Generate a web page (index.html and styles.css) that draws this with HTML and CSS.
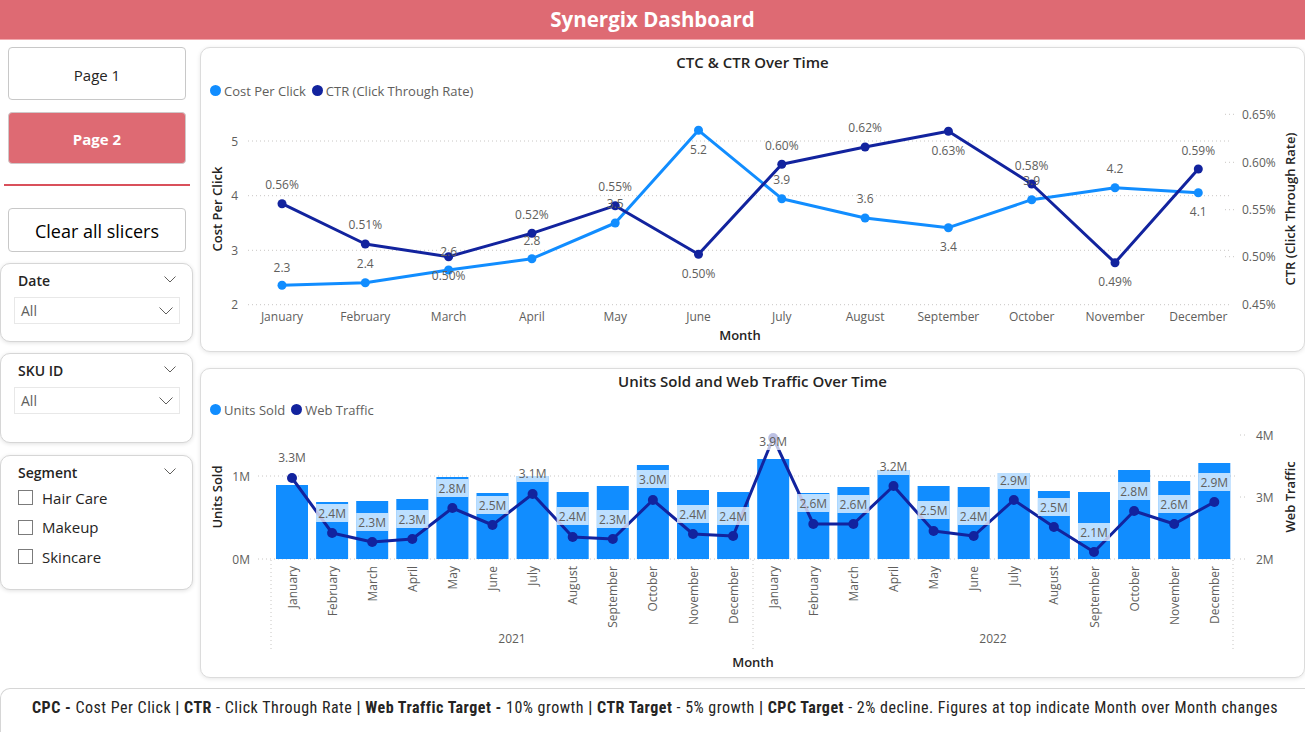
FILE: index.html
```html
<!DOCTYPE html>
<html lang="en">
<head>
<meta charset="utf-8">
<title>Synergix Dashboard</title>
<link rel="stylesheet" href="styles.css">
</head>
<body>
<header class="topbar">Synergix Dashboard</header>
<div class="layout">
  <aside class="sidebar">
    <div class="nav-btn">Page 1</div>
    <div class="nav-btn nav-active">Page 2</div>
    <div class="divider"></div>
    <div class="clear-btn">Clear all slicers</div>

    <div class="slicer slicer-date">
      <div class="slicer-head"><span>Date</span><svg class="chev" width="12" height="7" viewBox="0 0 12 7"><path d="M0.5 0.5 L6 6 L11.5 0.5" fill="none" stroke="#605E5C" stroke-width="1"/></svg></div>
      <div class="dropdown"><span>All</span><svg class="chev" width="14" height="8" viewBox="0 0 14 8"><path d="M0.5 0.5 L7 7 L13.5 0.5" fill="none" stroke="#605E5C" stroke-width="1"/></svg></div>
    </div>

    <div class="slicer slicer-sku">
      <div class="slicer-head"><span>SKU ID</span><svg class="chev" width="12" height="7" viewBox="0 0 12 7"><path d="M0.5 0.5 L6 6 L11.5 0.5" fill="none" stroke="#605E5C" stroke-width="1"/></svg></div>
      <div class="dropdown"><span>All</span><svg class="chev" width="14" height="8" viewBox="0 0 14 8"><path d="M0.5 0.5 L7 7 L13.5 0.5" fill="none" stroke="#605E5C" stroke-width="1"/></svg></div>
    </div>

    <div class="slicer slicer-seg">
      <div class="slicer-head"><span>Segment</span><svg class="chev" width="12" height="7" viewBox="0 0 12 7"><path d="M0.5 0.5 L6 6 L11.5 0.5" fill="none" stroke="#605E5C" stroke-width="1"/></svg></div>
      <div class="check-list">
        <label class="check"><span class="box"></span>Hair Care</label>
        <label class="check"><span class="box"></span>Makeup</label>
        <label class="check"><span class="box"></span>Skincare</label>
      </div>
    </div>
  </aside>

  <main class="charts">
    <section class="card card-top">
      <div class="card-title">CTC &amp; CTR Over Time</div>
      <div class="legend">
        <span class="lg"><i class="dot dot-light"></i>Cost Per Click</span>
        <span class="lg"><i class="dot dot-dark"></i>CTR (Click Through Rate)</span>
      </div>
      <svg class="plot" width="1103" height="245" viewBox="0 0 1103 245">
        <g class="grid">
          <line x1="47" y1="35" x2="1029" y2="35"/>
          <line x1="47" y1="89.7" x2="1029" y2="89.7"/>
          <line x1="47" y1="144.3" x2="1029" y2="144.3"/>
          <line x1="47" y1="198.7" x2="1029" y2="198.7"/>
          <line x1="1024" y1="8.3" x2="1036" y2="8.3"/>
          <line x1="1024" y1="56.3" x2="1036" y2="56.3"/>
          <line x1="1024" y1="103.7" x2="1036" y2="103.7"/>
          <line x1="1024" y1="150.7" x2="1036" y2="150.7"/>
        </g>
        <g class="tick" text-anchor="end">
          <text x="37" y="35">5</text>
          <text x="37" y="89.7">4</text>
          <text x="37" y="144.3">3</text>
          <text x="37" y="198.7">2</text>
        </g>
        <g class="tick" text-anchor="start">
          <text x="1041" y="8.3">0.65%</text>
          <text x="1041" y="56.3">0.60%</text>
          <text x="1041" y="103.7">0.55%</text>
          <text x="1041" y="150.7">0.50%</text>
          <text x="1041" y="198">0.45%</text>
        </g>
        <g class="tick" text-anchor="middle">
          <text x="81" y="210">January</text>
          <text x="164.3" y="210">February</text>
          <text x="247.6" y="210">March</text>
          <text x="330.9" y="210">April</text>
          <text x="414.2" y="210">May</text>
          <text x="497.5" y="210">June</text>
          <text x="580.8" y="210">July</text>
          <text x="664.1" y="210">August</text>
          <text x="747.4" y="210">September</text>
          <text x="830.7" y="210">October</text>
          <text x="914" y="210">November</text>
          <text x="997.3" y="210">December</text>
        </g>
        <text class="axis-title" x="539" y="229" text-anchor="middle">Month</text>
        <text class="axis-title" transform="translate(16,103) rotate(-90)" text-anchor="middle">Cost Per Click</text>
        <text class="axis-title" transform="translate(1089,103) rotate(-90)" text-anchor="middle">CTR (Click Through Rate)</text>

        <polyline class="ln ln-light" points="81,179.3 164.3,176.7 247.6,164 330.9,152.7 414.2,117 497.5,24.3 580.8,92.7 664.1,112 747.4,121.7 830.7,93.7 914,81.7 997.3,86.7"/>
        <g class="mk-light">
          <circle cx="81" cy="179.3" r="4.5"/><circle cx="164.3" cy="176.7" r="4.5"/><circle cx="247.6" cy="164" r="4.5"/><circle cx="330.9" cy="152.7" r="4.5"/><circle cx="414.2" cy="117" r="4.5"/><circle cx="497.5" cy="24.3" r="4.5"/><circle cx="580.8" cy="92.7" r="4.5"/><circle cx="664.1" cy="112" r="4.5"/><circle cx="747.4" cy="121.7" r="4.5"/><circle cx="830.7" cy="93.7" r="4.5"/><circle cx="914" cy="81.7" r="4.5"/><circle cx="997.3" cy="86.7" r="4.5"/>
        </g>
        <polyline class="ln ln-dark" points="81,97.7 164.3,138 247.6,150.7 330.9,127.3 414.2,99.7 497.5,148.3 580.8,58.3 664.1,41 747.4,25.3 830.7,78 914,156.7 997.3,63"/>
        <g class="mk-dark">
          <circle cx="81" cy="97.7" r="4.5"/><circle cx="164.3" cy="138" r="4.5"/><circle cx="247.6" cy="150.7" r="4.5"/><circle cx="330.9" cy="127.3" r="4.5"/><circle cx="414.2" cy="99.7" r="4.5"/><circle cx="497.5" cy="148.3" r="4.5"/><circle cx="580.8" cy="58.3" r="4.5"/><circle cx="664.1" cy="41" r="4.5"/><circle cx="747.4" cy="25.3" r="4.5"/><circle cx="830.7" cy="78" r="4.5"/><circle cx="914" cy="156.7" r="4.5"/><circle cx="997.3" cy="63" r="4.5"/>
        </g>
        <g class="dl" text-anchor="middle">
          <text x="81" y="161">2.3</text>
          <text x="164.3" y="157.7">2.4</text>
          <text x="247.6" y="145">2.6</text>
          <text x="330.9" y="134">2.8</text>
          <text x="414.2" y="97.3">3.5</text>
          <text x="497.5" y="43.3">5.2</text>
          <text x="580.8" y="73.3">3.9</text>
          <text x="664.1" y="92.7">3.6</text>
          <text x="747.4" y="140.7">3.4</text>
          <text x="830.7" y="74">3.9</text>
          <text x="914" y="62.7">4.2</text>
          <text x="997.3" y="105.7">4.1</text>
          <text x="81" y="78.7">0.56%</text>
          <text x="164.3" y="118.3">0.51%</text>
          <text x="247.6" y="169.3">0.50%</text>
          <text x="330.9" y="108.3">0.52%</text>
          <text x="414.2" y="80">0.55%</text>
          <text x="497.5" y="167.3">0.50%</text>
          <text x="580.8" y="39.7">0.60%</text>
          <text x="664.1" y="21.7">0.62%</text>
          <text x="747.4" y="44.3">0.63%</text>
          <text x="830.7" y="59.3">0.58%</text>
          <text x="914" y="175">0.49%</text>
          <text x="997.3" y="44.3">0.59%</text>
        </g>
      </svg>
    </section>

    <section class="card card-bottom">
      <div class="card-title">Units Sold and Web Traffic Over Time</div>
      <div class="legend">
        <span class="lg"><i class="dot dot-light"></i>Units Sold</span>
        <span class="lg"><i class="dot dot-dark"></i>Web Traffic</span>
      </div>
      <svg class="plot" width="1103" height="250" viewBox="0 0 1103 250">
        <g class="grid">
          <line x1="57" y1="49" x2="1034" y2="49"/>
          <line x1="57" y1="132" x2="1034" y2="132"/>
          <line x1="1039" y1="8" x2="1047" y2="8"/>
          <line x1="1039" y1="70" x2="1047" y2="70"/>
          <line x1="1039" y1="132" x2="1047" y2="132"/>
          <line x1="70" y1="133" x2="70" y2="223"/>
          <line x1="552" y1="133" x2="552" y2="223"/>
          <line x1="1032" y1="133" x2="1032" y2="223"/>
        </g>
        <g class="tick" text-anchor="end">
          <text x="49" y="49">1M</text>
          <text x="49" y="132">0M</text>
        </g>
        <g class="tick" text-anchor="start">
          <text x="1055" y="8">4M</text>
          <text x="1055" y="70">3M</text>
          <text x="1055" y="132">2M</text>
        </g>
        <g class="bars">
          <rect x="75" y="58" width="32" height="74"/>
          <rect x="115.1" y="75" width="32" height="57"/>
          <rect x="155.2" y="74" width="32" height="58"/>
          <rect x="195.3" y="72" width="32" height="60"/>
          <rect x="235.4" y="50" width="32" height="82"/>
          <rect x="275.5" y="66" width="32" height="66"/>
          <rect x="315.6" y="49" width="32" height="83"/>
          <rect x="355.7" y="65" width="32" height="67"/>
          <rect x="395.8" y="59" width="32" height="73"/>
          <rect x="435.9" y="38" width="32" height="94"/>
          <rect x="476" y="63" width="32" height="69"/>
          <rect x="516.1" y="65" width="32" height="67"/>
          <rect x="556.2" y="32" width="32" height="100"/>
          <rect x="596.3" y="66" width="32" height="66"/>
          <rect x="636.4" y="60" width="32" height="72"/>
          <rect x="676.5" y="43" width="32" height="89"/>
          <rect x="716.6" y="59" width="32" height="73"/>
          <rect x="756.7" y="60" width="32" height="72"/>
          <rect x="796.8" y="46" width="32" height="86"/>
          <rect x="836.9" y="64" width="32" height="68"/>
          <rect x="877" y="65" width="32" height="67"/>
          <rect x="917.1" y="43" width="32" height="89"/>
          <rect x="957.2" y="54" width="32" height="78"/>
          <rect x="997.3" y="36" width="32" height="96"/>
        </g>
        <polyline class="ln ln-dark" points="91,51 131.1,106 171.2,115 211.3,112 251.4,81 291.5,98 331.6,67 371.7,110 411.8,112 451.9,73 492,107 532.1,109 572.2,11 612.3,97 652.4,97 692.5,59 732.6,104 772.7,109 812.8,73 852.9,100 893,125 933.1,84 973.2,97 1013.3,75"/>
        <g class="mk-dark">
          <circle cx="91" cy="51" r="5"/><circle cx="131.1" cy="106" r="5"/><circle cx="171.2" cy="115" r="5"/><circle cx="211.3" cy="112" r="5"/><circle cx="251.4" cy="81" r="5"/><circle cx="291.5" cy="98" r="5"/><circle cx="331.6" cy="67" r="5"/><circle cx="371.7" cy="110" r="5"/><circle cx="411.8" cy="112" r="5"/><circle cx="451.9" cy="73" r="5"/><circle cx="492" cy="107" r="5"/><circle cx="532.1" cy="109" r="5"/><circle cx="572.2" cy="11" r="5"/><circle cx="612.3" cy="97" r="5"/><circle cx="652.4" cy="97" r="5"/><circle cx="692.5" cy="59" r="5"/><circle cx="732.6" cy="104" r="5"/><circle cx="772.7" cy="109" r="5"/><circle cx="812.8" cy="73" r="5"/><circle cx="852.9" cy="100" r="5"/><circle cx="893" cy="125" r="5"/><circle cx="933.1" cy="84" r="5"/><circle cx="973.2" cy="97" r="5"/><circle cx="1013.3" cy="75" r="5"/>
        </g>
        <g class="lbl-box">
          <rect x="75" y="21" width="32" height="18"/>
          <rect x="115.1" y="77" width="32" height="18"/>
          <rect x="155.2" y="86" width="32" height="18"/>
          <rect x="195.3" y="83" width="32" height="18"/>
          <rect x="235.4" y="52" width="32" height="18"/>
          <rect x="275.5" y="69" width="32" height="18"/>
          <rect x="315.6" y="37" width="32" height="18"/>
          <rect x="355.7" y="80" width="32" height="18"/>
          <rect x="395.8" y="83" width="32" height="18"/>
          <rect x="435.9" y="43" width="32" height="18"/>
          <rect x="476" y="78" width="32" height="18"/>
          <rect x="516.1" y="80" width="32" height="18"/>
          <rect x="556.2" y="5" width="32" height="18"/>
          <rect x="596.3" y="67" width="32" height="18"/>
          <rect x="636.4" y="68" width="32" height="18"/>
          <rect x="676.5" y="30" width="32" height="18"/>
          <rect x="716.6" y="74" width="32" height="18"/>
          <rect x="756.7" y="80" width="32" height="18"/>
          <rect x="796.8" y="44" width="32" height="18"/>
          <rect x="836.9" y="71" width="32" height="18"/>
          <rect x="877" y="96" width="32" height="18"/>
          <rect x="917.1" y="55" width="32" height="18"/>
          <rect x="957.2" y="68" width="32" height="18"/>
          <rect x="997.3" y="46" width="32" height="18"/>
        </g>
        <g class="dl" text-anchor="middle">
          <text x="91" y="30">3.3M</text>
          <text x="131.1" y="86">2.4M</text>
          <text x="171.2" y="95">2.3M</text>
          <text x="211.3" y="92">2.3M</text>
          <text x="251.4" y="61">2.8M</text>
          <text x="291.5" y="78">2.5M</text>
          <text x="331.6" y="46">3.1M</text>
          <text x="371.7" y="89">2.4M</text>
          <text x="411.8" y="92">2.3M</text>
          <text x="451.9" y="52">3.0M</text>
          <text x="492" y="87">2.4M</text>
          <text x="532.1" y="89">2.4M</text>
          <text x="572.2" y="14">3.9M</text>
          <text x="612.3" y="76">2.6M</text>
          <text x="652.4" y="77">2.6M</text>
          <text x="692.5" y="39">3.2M</text>
          <text x="732.6" y="83">2.5M</text>
          <text x="772.7" y="89">2.4M</text>
          <text x="812.8" y="53">2.9M</text>
          <text x="852.9" y="80">2.5M</text>
          <text x="893" y="105">2.1M</text>
          <text x="933.1" y="64">2.8M</text>
          <text x="973.2" y="77">2.6M</text>
          <text x="1013.3" y="55">2.9M</text>
        </g>
        <g class="tick" text-anchor="end">
          <text transform="translate(91,139) rotate(-90)">January</text>
          <text transform="translate(131.1,139) rotate(-90)">February</text>
          <text transform="translate(171.2,139) rotate(-90)">March</text>
          <text transform="translate(211.3,139) rotate(-90)">April</text>
          <text transform="translate(251.4,139) rotate(-90)">May</text>
          <text transform="translate(291.5,139) rotate(-90)">June</text>
          <text transform="translate(331.6,139) rotate(-90)">July</text>
          <text transform="translate(371.7,139) rotate(-90)">August</text>
          <text transform="translate(411.8,139) rotate(-90)">September</text>
          <text transform="translate(451.9,139) rotate(-90)">October</text>
          <text transform="translate(492,139) rotate(-90)">November</text>
          <text transform="translate(532.1,139) rotate(-90)">December</text>
          <text transform="translate(572.2,139) rotate(-90)">January</text>
          <text transform="translate(612.3,139) rotate(-90)">February</text>
          <text transform="translate(652.4,139) rotate(-90)">March</text>
          <text transform="translate(692.5,139) rotate(-90)">April</text>
          <text transform="translate(732.6,139) rotate(-90)">May</text>
          <text transform="translate(772.7,139) rotate(-90)">June</text>
          <text transform="translate(812.8,139) rotate(-90)">July</text>
          <text transform="translate(852.9,139) rotate(-90)">August</text>
          <text transform="translate(893,139) rotate(-90)">September</text>
          <text transform="translate(933.1,139) rotate(-90)">October</text>
          <text transform="translate(973.2,139) rotate(-90)">November</text>
          <text transform="translate(1013.3,139) rotate(-90)">December</text>
        </g>
        <g class="tick" text-anchor="middle">
          <text x="311" y="211">2021</text>
          <text x="792" y="211">2022</text>
        </g>
        <text class="axis-title" x="552" y="235" text-anchor="middle">Month</text>
        <text class="axis-title" transform="translate(16,70) rotate(-90)" text-anchor="middle">Units Sold</text>
        <text class="axis-title" transform="translate(1089,70) rotate(-90)" text-anchor="middle">Web Traffic</text>
      </svg>
    </section>
  </main>
</div>
<footer class="notes">
  <p><b>CPC -</b> Cost Per Click <b>| CTR</b> - Click Through Rate <b>| Web Traffic Target -</b> 10% growth <b>| CTR Target</b> - 5% growth <b>| CPC Target</b> - 2% decline. Figures at top indicate Month over Month changes</p>
</footer>
</body>
</html>
```

FILE: styles.css
```css
* { box-sizing: border-box; }

html, body {
  margin: 0;
  padding: 0;
}

body {
  width: 1305px;
  height: 732px;
  overflow: hidden;
  background: #ffffff;
  font-family: "Open Sans", "Noto Sans", "DejaVu Sans", sans-serif;
  color: #252423;
}

.topbar {
  height: 40px;
  background: #de6a73;
  border-bottom: 1px solid #f2a9ae;
  color: #ffffff;
  font-weight: 700;
  font-size: 20.5px;
  display: flex;
  align-items: center;
  justify-content: center;
  padding-bottom: 2px;
}

.layout {
  display: flex;
  gap: 7px;
  height: 648px;
}

/* ---------- sidebar ---------- */
.sidebar {
  width: 193px;
  flex: none;
  display: flex;
  flex-direction: column;
  padding-top: 7px;
}

.nav-btn {
  margin-left: 8px;
  width: 178px;
  height: 53px;
  border: 1px solid #c8c8c8;
  border-radius: 4px;
  background: #ffffff;
  display: flex;
  align-items: center;
  justify-content: center;
  padding-top: 2px;
  font-size: 15px;
  color: #252423;
}

.nav-active {
  margin-top: 12px;
  height: 52px;
  background: #de6a73;
  border-color: #d0c8c9;
  color: #ffffff;
  font-weight: 700;
}

.divider {
  margin: 20px 0 0 4px;
  width: 186px;
  height: 2px;
  background: #d9505b;
}

.clear-btn {
  margin: 22px 0 0 8px;
  width: 178px;
  height: 44px;
  border: 1px solid #c8c8c8;
  border-radius: 4px;
  display: flex;
  align-items: center;
  justify-content: center;
  padding-top: 2px;
  font-size: 18px;
  color: #000000;
}

.slicer {
  width: 193px;
  border: 1px solid #d6d6d6;
  border-radius: 10px;
  background: #ffffff;
  box-shadow: 0 1px 4px rgba(0, 0, 0, 0.12);
  padding: 6px 16px 0 13px;
}

.slicer-date { margin-top: 11px; height: 79px; }
.slicer-sku { margin-top: 11px; height: 90px; }
.slicer-seg { margin-top: 12px; height: 135px; }

.slicer-head {
  height: 20px;
  display: flex;
  align-items: center;
  justify-content: space-between;
  padding-left: 4px;
  font-size: 14px;
  font-weight: 600;
  color: #252423;
}

.slicer-head .chev { margin-top: -2px; }

.dropdown {
  margin-top: 7px;
  width: 166px;
  height: 27px;
  border: 1px solid #e8e8e8;
  display: flex;
  align-items: center;
  justify-content: space-between;
  padding: 0 6px 0 6px;
  font-size: 14px;
  color: #605e5c;
}

.check-list {
  margin-top: 6px;
  display: flex;
  flex-direction: column;
  gap: 10.5px;
}

.check {
  display: flex;
  align-items: center;
  height: 19px;
  padding-left: 4px;
  font-size: 15px;
  color: #252423;
}

.check .box {
  width: 15px;
  height: 15px;
  border: 1px solid #7b7b7b;
  background: #ffffff;
  margin-right: 9px;
}

/* ---------- charts ---------- */
.charts {
  flex: 1;
  display: flex;
  flex-direction: column;
  gap: 16px;
  padding-top: 7px;
}

.card {
  border: 1px solid #dcdcdc;
  border-radius: 10px;
  background: #ffffff;
  box-shadow: 0 1px 4px rgba(0, 0, 0, 0.10);
  display: flex;
  flex-direction: column;
}

.card-top { height: 305px; }
.card-bottom { height: 310px; }

.card-title {
  height: 27px;
  display: flex;
  align-items: center;
  justify-content: center;
  font-size: 15px;
  font-weight: 600;
  color: #252423;
}

.card-bottom .card-title { height: 23px; }

.legend {
  height: 31px;
  display: flex;
  align-items: center;
  gap: 6px;
  padding-left: 9px;
  font-size: 13px;
  color: #605e5c;
}

.card-bottom .legend { height: 35px; }

.lg {
  display: flex;
  align-items: center;
}

.dot {
  width: 11px;
  height: 11px;
  border-radius: 50%;
  margin-right: 3px;
}

.dot-light { background: #118dff; }
.dot-dark { background: #12239e; }

.plot {
  display: block;
  flex: none;
}

.grid line {
  stroke: #c8c6c4;
  stroke-width: 1;
  stroke-dasharray: 1 3;
}

.tick text {
  font-size: 12px;
  fill: #605e5c;
  dominant-baseline: central;
}

.dl text {
  font-size: 12px;
  fill: #605e5c;
  dominant-baseline: central;
}

.axis-title {
  font-size: 13px;
  font-weight: 600;
  fill: #252423;
  dominant-baseline: central;
}

.ln {
  fill: none;
  stroke-width: 3;
  stroke-linejoin: round;
}

.ln-light { stroke: #118dff; }
.ln-dark { stroke: #12239e; }

.mk-light circle { fill: #118dff; }
.mk-dark circle { fill: #12239e; }

.bars rect { fill: #118dff; }

.lbl-box rect {
  fill: #ffffff;
  fill-opacity: 0.72;
}

/* ---------- footer ---------- */
.notes {
  width: 1312px;
  height: 44px;
  border: 1px solid #d6d6d6;
  border-right: none;
  border-bottom: none;
  border-radius: 10px 0 0 0;
  background: #ffffff;
  padding: 9px 0 0 31px;
}

.notes p {
  margin: 0;
  line-height: 20px;
  font-family: "Liberation Sans Narrow", "Roboto Condensed", "Roboto", sans-serif;
  font-size: 16px;
  letter-spacing: 0.5px;
  color: #252423;
  white-space: nowrap;
}

.notes b { font-weight: 700; }
```
